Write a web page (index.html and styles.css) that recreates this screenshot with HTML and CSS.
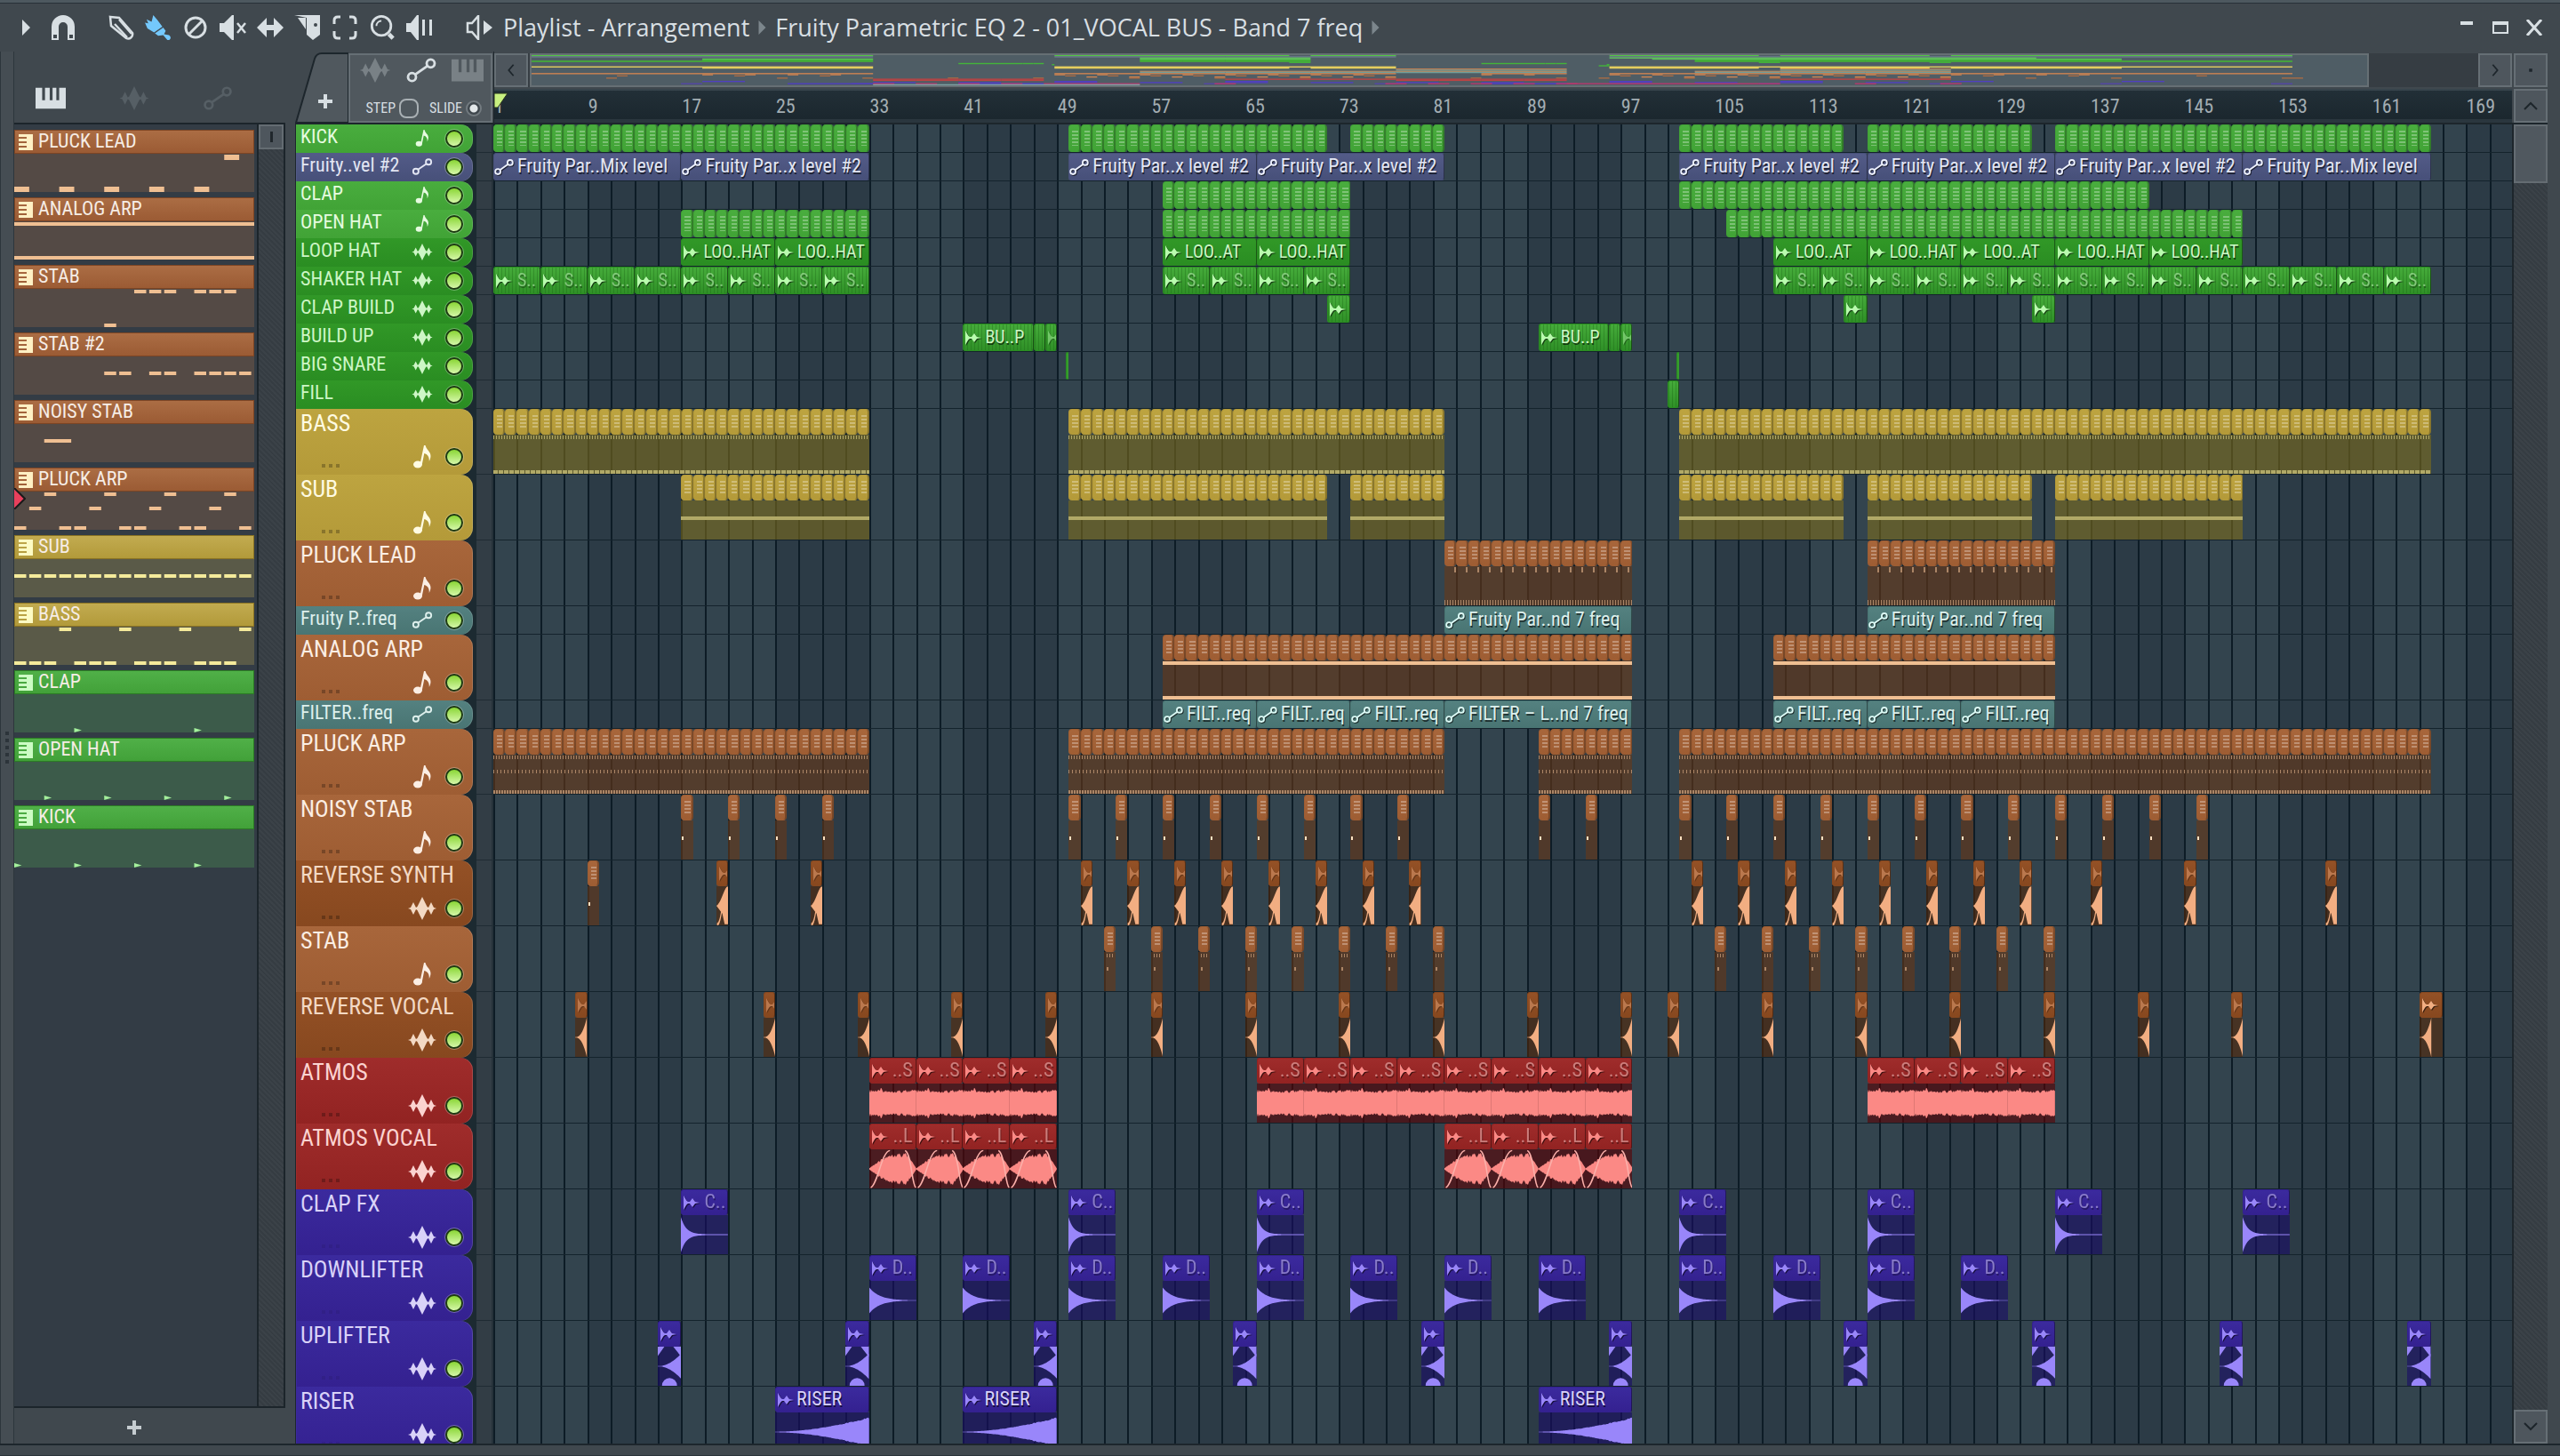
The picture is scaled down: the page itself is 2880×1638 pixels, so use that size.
FILE: index.html
```html
<!DOCTYPE html>
<html lang="en">
<head>
    <meta charset="UTF-8">
    <meta name="viewport" content="width=device-width, initial-scale=1.0">
    <title>Playlist - Arrangement</title>
    <link rel="stylesheet" href="styles.css">
</head>
<body>
    <!-- shared icons -->
    <svg class="defs" aria-hidden="true">
        <symbol id="i-note" viewBox="0 0 20 26"><ellipse cx="5" cy="21.500" rx="5" ry="4"/><path d="M7.500 21 12 0h1.500c1 5 6 7 6 12 0 2-.7 4-1.700 6 .3-5-1.500-8-5.500-9L9.800 21.500z"/></symbol>
        <symbol id="i-wave" viewBox="0 0 32 26"><path d="M0 13l3-1 3-6 3 6 1.500-1L14 4l2-4 2 4 3.500 7 1.500 1 3-6 3 6 3 1-3 1-3 6-3-6-1.500 1L18 22l-2 4-2-4-3.500-7L9 14l-3 6-3-6z"/></symbol>
        <symbol id="i-line" viewBox="0 0 24 20"><g fill="none" stroke="currentColor" stroke-width="2"><circle cx="4.500" cy="15.500" r="3.200"/><circle cx="19.500" cy="4.500" r="3.200"/><path d="M7 13.500 17 6.500"/></g></symbol>
        <symbol id="i-clip" viewBox="0 0 18 18"><path d="M0 1c2 3 3 6 5 7l2 0 3-4 3 4 5 1-5 1-3 4-3-4H5c-2 1-3 4-5 7z"/></symbol>
        <symbol id="i-piano" viewBox="0 0 32 22"><path d="M0 0h7v13h3V0h5v13h3V0h4v13h3V0h7v22H0z"/></symbol>
        <symbol id="i-keys" viewBox="0 0 16 18"><path d="M0 0h16v18H0v-3h9v-2H0V10h9V8H0V5h9V3H0z"/></symbol>
    </svg>

    <div class="window">
        <header class="titlebar">
            <button class="tool tool-arrow" aria-label="Menu"><svg viewBox="0 0 9 18"><path d="M0 0l9 9-9 9z"/></svg></button>
            <button class="tool tool-magnet" aria-label="Snap"><svg viewBox="0 0 26 28"><path d="M0 28V13a13 13 0 0 1 26 0v15h-8V13a5 5 0 0 0-10 0v15zM2 22v4h4v-4zM20 22v4h4v-4z" fill-rule="evenodd"/></svg></button>
            <button class="tool" aria-label="Draw"><svg viewBox="0 0 30 28"><g fill="none" stroke="currentColor" stroke-width="2.500"><path d="M3 2l10 1 15 17c1 4-3 8-7 6L4 12z"/><path d="M8 10l14 15M13 5l14 16"/></g></svg></button>
            <button class="tool tool-on" aria-label="Paint"><svg viewBox="0 0 32 30"><path d="M10 0l5 6 6 8-10 7-8-5-3-7 4 1-2-5 6 3zM22 15l3 4-2 4 6 1c4 3 1 7-2 6l-5-6-6 1-4-3z"/></svg></button>
            <button class="tool" aria-label="Delete"><svg viewBox="0 0 28 28"><g fill="none" stroke="currentColor" stroke-width="3"><circle cx="14" cy="14" r="11"/><path d="M6 22 22 6"/></g></svg></button>
            <button class="tool" aria-label="Mute"><svg viewBox="0 0 30 28"><path d="M0 9h5l9-9h2v28h-2l-9-9H0z"/><path d="M20 9l9 11M29 9l-9 11" fill="none" stroke="currentColor" stroke-width="2.500"/></svg></button>
            <button class="tool" aria-label="Slip"><svg viewBox="0 0 30 28"><path d="M0 14 11 3v8h8V3l11 11-11 11v-8h-8v8z"/></svg></button>
            <button class="tool" aria-label="Slice"><svg viewBox="0 0 30 28"><path d="M0 0h29v22l-8 6-7-6V3zM4 3l9 13V3zM22 11a2 2 0 1 0 4 0 2 2 0 1 0-4 0" fill-rule="evenodd"/></svg></button>
            <button class="tool" aria-label="Select"><svg viewBox="0 0 28 28"><path d="M2 10V6q0-4 4-4h3M19 2h3q4 0 4 4v4M26 18v4q0 4-4 4h-3M9 26H6q-4 0-4-4v-4" fill="none" stroke="currentColor" stroke-width="3"/></svg></button>
            <button class="tool" aria-label="Zoom"><svg viewBox="0 0 30 30"><g fill="none" stroke="currentColor"><circle cx="14" cy="13" r="11.500" stroke-width="3"/><path d="M8 13a6 6 0 0 1 6-6" stroke-width="2"/><path d="M23 23l5 5" stroke-width="5"/></g></svg></button>
            <button class="tool" aria-label="Playback"><svg viewBox="0 0 30 28"><path d="M0 9h5l7-9h2v28h-2l-7-9H0zM18 5h3v18h-3zM26 5h3v18h-3z"/></svg></button>
            <button class="tool tool-speaker" aria-label="Preview"><svg viewBox="0 0 30 28"><path d="M2 9h5l7-8v26l-7-8H2z" fill="none" stroke="currentColor" stroke-width="2.500"/><path d="M20 6l10 8-10 8z"/></svg></button>
            <h1 class="crumbs">
                <span>Playlist - Arrangement</span>
                <svg class="crumb-arrow" viewBox="0 0 8 16"><path d="M0 0l8 8-8 8z"/></svg>
                <span>Fruity Parametric EQ 2 - 01_VOCAL BUS - Band 7 freq</span>
                <svg class="crumb-arrow" viewBox="0 0 8 16"><path d="M0 0l8 8-8 8z"/></svg>
            </h1>
            <div class="window-buttons">
                <button aria-label="Minimize"><svg viewBox="0 0 18 18"><path d="M2 2h14v4H2z"/></svg></button>
                <button aria-label="Maximize"><svg viewBox="0 0 18 18"><path d="M0 2h18v14H0zM2 6v8h14V6z" fill-rule="evenodd"/></svg></button>
                <button aria-label="Close"><svg viewBox="0 0 18 18"><path d="M1 0l16 18M17 0 1 18" fill="none" stroke="currentColor" stroke-width="3"/></svg></button>
            </div>
        </header>

        <main class="workspace">
            <div class="grip"><i></i><i></i><i></i><i></i><i></i></div>

            <!-- pattern picker -->
            <aside class="picker">
                <nav class="picker-tabs">
                    <button class="picker-tab active" aria-label="Patterns"><svg><use href="#i-piano"/></svg></button>
                    <button class="picker-tab" aria-label="Audio"><svg><use href="#i-wave"/></svg></button>
                    <button class="picker-tab" aria-label="Automation"><svg><use href="#i-line"/></svg></button>
                </nav>
                <div class="picker-body">
                    <div class="picker-list" id="pickerList"></div>
                    <div class="picker-scroll hatch"><div class="picker-thumb"></div></div>
                </div>
                <button class="picker-add" aria-label="Add pattern"><svg viewBox="0 0 16 16"><path d="M6 0h4v6h6v4h-6v6H6v-6H0V6h6z"/></svg></button>
            </aside>

            <!-- arrangement -->
            <section class="arrangement">
                <div class="corner">
                    <div class="corner-tab">
                        <svg class="corner-shape" viewBox="0 0 60 80" preserveAspectRatio="none"><path d="M1 80 22 8q2-6 8-6h30v78z"/></svg>
                        <button class="corner-add" aria-label="Add track"><svg viewBox="0 0 16 16"><path d="M6 0h4v6h6v4h-6v6H6v-6H0V6h6z"/></svg></button>
                    </div>
                    <div class="corner-box">
                        <div class="corner-modes">
                            <button class="dim" aria-label="Audio clips"><svg><use href="#i-wave"/></svg></button>
                            <button aria-label="Automation clips"><svg><use href="#i-line"/></svg></button>
                            <button class="dim" aria-label="Pattern clips"><svg><use href="#i-piano"/></svg></button>
                        </div>
                        <div class="corner-opts">
                            <label for="step">STEP</label><input type="checkbox" id="step" class="step-box">
                            <label for="slide">SLIDE</label><input type="checkbox" id="slide" class="slide-box" checked>
                        </div>
                    </div>
                </div>
                <div class="timeline">
                    <div class="overview">
                        <button class="scroll-button" aria-label="Scroll left"><svg viewBox="0 0 10 18"><path d="M8 2 2 9l6 7"/></svg></button>
                        <div class="overview-track">
                            <svg class="minimap" id="minimap" viewBox="0 0 172 27" preserveAspectRatio="none"></svg>
                        </div>
                        <button class="scroll-button" aria-label="Scroll right"><svg viewBox="0 0 10 18"><path d="M2 2l6 7-6 7"/></svg></button>
                    </div>
                    <div class="ruler" id="ruler"><svg class="playhead" viewBox="0 0 16 18"><path d="M0 1h15L4 17H0z"/></svg></div>
                </div>
                <div class="side-head">
                    <button class="scroll-button" aria-label="Options"><svg viewBox="0 0 10 18"><path d="M5 7v4" class="thick"/></svg></button>
                    <button class="scroll-button" aria-label="Scroll up"><svg viewBox="0 0 16 10"><path d="M1 9l7-7 7 7"/></svg></button>
                </div>

                <div class="tracks" id="tracks">
                    <div class="cells" id="cells"></div>
                </div>
                <div class="side-scroll hatch">
                    <div class="side-thumb"></div>
                    <button class="scroll-button" aria-label="Scroll down"><svg viewBox="0 0 16 10"><path d="M1 1l7 7 7-7"/></svg></button>
                </div>
            </section>
        </main>
        <footer class="bottom-edge"></footer>
    </div>

    <script src="playlist.js"></script>
</body>
</html>
```
FILE: styles.css
```css
* {
    box-sizing: border-box;
}
body {
    margin: 0;
    background-color: #40484e;
    color: #d8dfe3;
    font-family: "Roboto Condensed", "Open Sans Condensed", "Open Sans", sans-serif;
    font-size: 22px;
}
button {
    display: flex;
    align-items: center;
    justify-content: center;
    padding: 0;
    border: 0;
    background: none;
    color: inherit;
    font: inherit;
}
svg {
    display: block;
    fill: currentColor;
}
.defs {
    position: absolute;
    width: 0;
    height: 0;
}
.window {
    display: flex;
    flex-direction: column;
    height: 100vh;
    border-top: 3px solid #4d585f;
    overflow: hidden;
}

/* title bar */
.titlebar {
    display: flex;
    align-items: center;
    flex: none;
    height: 55px;
    padding: 0 20px 0 24px;
    border-top: 1px solid #283138;
}
.tool {
    width: 30px;
    height: 30px;
    margin-right: 12px;
}
.tool svg {
    width: 30px;
    height: 28px;
}
.tool-arrow {
    width: 10px;
    margin-right: 22px;
}
.tool-arrow svg {
    width: 9px;
    height: 18px;
}
.tool-magnet {
    margin-right: 35px;
}
.tool-on {
    color: #74c8fc;
}
.tool-speaker {
    margin-left: 25px;
}
.crumbs {
    display: flex;
    align-items: center;
    flex: 1;
    gap: 10px;
    margin: 0;
    font-family: "Open Sans", "Noto Sans", sans-serif;
    font-size: 27px;
    line-height: 32px;
    font-weight: 400;
}
.crumb-arrow {
    width: 9px;
    height: 16px;
    color: #7c868c;
}
.window-buttons {
    display: flex;
    gap: 20px;
}
.window-buttons svg {
    width: 18px;
    height: 18px;
}

/* main area */
.workspace {
    display: flex;
    flex: 1;
    min-height: 0;
    padding-right: 14px;
}
.grip {
    display: flex;
    flex-direction: column;
    align-items: center;
    justify-content: center;
    gap: 4px;
    width: 16px;
    border-left: 1px solid #2d363c;
    border-right: 1px solid #2d363c;
    background-color: #454d53;
}
.grip i {
    width: 4px;
    height: 4px;
    background-color: #2c343a;
}

/* pattern picker */
.picker {
    display: flex;
    flex-direction: column;
    width: 305px;
    margin-right: 11px;
}
.picker-tabs {
    display: flex;
    align-items: flex-end;
    gap: 60px;
    height: 80px;
    padding: 0 0 14px 24px;
}
.picker-tab {
    color: #565f65;
}
.picker-tab.active {
    color: #d8dfe3;
}
.picker-tab svg {
    width: 34px;
    height: 27px;
}
.picker-body {
    display: flex;
    flex: 1;
    min-height: 0;
    border-top: 2px solid #1c252b;
    border-bottom: 2px solid #1c252b;
    border-right: 2px solid #1c252b;
}
.picker-list {
    flex: 1;
    padding-top: 6px;
    background-color: #333c45;
    overflow: hidden;
}
.picker-item {
    position: relative;
    margin: 0 3px 6px 0;
}
.picker-name {
    display: flex;
    align-items: center;
    gap: 6px;
    height: 27px;
    padding-left: 4px;
    border: 1px solid var(--edge);
    background: linear-gradient(var(--top), var(--bottom));
    color: #f6ede6;
    font-size: 22px;
    line-height: 22px;
}
.picker-name span {
    padding-bottom: 2px;
}
.picker-name svg {
    width: 16px;
    height: 18px;
    color: var(--key);
}
.picker-notes {
    width: 100%;
    height: 43px;
    background-color: var(--body);
    color: var(--note);
}
.picker-cursor {
    position: absolute;
    left: 0;
    top: 23px;
    width: 13px;
    height: 24px;
    fill: #e8405c;
    stroke: #1a1a1a;
    stroke-width: 2;
}
.picker-scroll {
    width: 30px;
    border-left: 2px solid #1c252b;
}
.picker-thumb {
    width: 28px;
    height: 28px;
    border: 2px solid #646c72;
    background: linear-gradient(#20272c, #20272c) center / 3px 12px no-repeat #4e565d;
}
.picker-add {
    flex: none;
    width: 270px;
    height: 40px;
    padding-top: 4px;
    color: #c5ccd0;
}
.picker-add svg, .corner-add svg {
    width: 16px;
    height: 16px;
}
.hatch {
    background: repeating-linear-gradient(45deg, #353c42 0 2px, #3b4248 2px 4px);
}
.brown {
    --top: #ab6d44;
    --bottom: #9b5b34;
    --edge: #7d4524;
    --body: #544a45;
    --note: #efbf92;
    --key: #fff0c4;
}
.yellow {
    --top: #c2ab50;
    --bottom: #b29a3a;
    --edge: #8b7423;
    --body: #5a5a48;
    --note: #f4ea9b;
    --key: #fdfbc4;
}
.green {
    --top: #50b048;
    --bottom: #42a139;
    --edge: #2b7c24;
    --body: #3c5b4a;
    --note: #a4f09c;
    --key: #ccfcc4;
}

/* arrangement layout */
.arrangement {
    display: grid;
    grid-template-columns: 223px 1fr 40px;
    grid-template-rows: 80px 1fr;
    flex: 1;
    min-width: 0;
}
.corner {
    display: flex;
    padding-right: 1px;
}
.corner-tab {
    position: relative;
    width: 60px;
    height: 80px;
}
.corner-shape {
    position: absolute;
    inset: 0;
    width: 60px;
    height: 80px;
    fill: #50585e;
    stroke: #1d262c;
    stroke-width: 2;
}
.corner-add {
    position: absolute;
    left: 22px;
    top: 44px;
    width: 24px;
    height: 24px;
}
.corner-box {
    flex: 1;
    margin-top: 2px;
    border: 2px solid #666f75;
    background-color: #50585e;
}
.corner-modes {
    display: flex;
    justify-content: space-between;
    padding: 3px 8px 0 10px;
}
.corner-modes svg {
    width: 36px;
    height: 28px;
}
.corner-modes .dim {
    color: #798186;
}
.corner-opts {
    display: flex;
    align-items: center;
    justify-content: flex-end;
    height: 43px;
    padding: 14px 10px 0 0;
    gap: 4px;
    font-size: 16px;
}
.corner-opts label + input {
    margin: 0 8px 0 0;
}
.corner-opts .slide-box {
    margin: 0;
}
.step-box {
    appearance: none;
    width: 22px;
    height: 22px;
    border: 2px solid #a9b0b4;
    border-radius: 8px;
}
.slide-box {
    appearance: none;
    width: 18px;
    height: 18px;
    border: 2px solid #737b80;
    border-radius: 9px;
    background: radial-gradient(#e3e8ea 0 4px, #3f474d 5px);
}
.timeline {
    min-width: 0;
    padding-top: 2px;
    border-left: 1px solid #1d262c;
}
.overview {
    display: flex;
    height: 38px;
}
.overview-track {
    flex: 1;
    padding: 0 123px 0 2px;
    background-color: #363d43;
}
.minimap {
    width: 100%;
    height: 38px;
    border: 2px solid #666f74;
    background-color: #4f5d65;
}
.scroll-button {
    width: 38px;
    height: 38px;
    border: 2px solid #666f75;
    background-color: #4e565d;
}
.scroll-button svg {
    width: 16px;
    height: 16px;
    fill: none;
    stroke: #1d252b;
    stroke-width: 2;
}
.scroll-button .thick {
    stroke-width: 4;
}
.ruler {
    position: relative;
    height: 38px;
    margin-top: 2px;
    border-top: 2px solid #37444c;
    border-bottom: 4px solid #2a363e;
    background: linear-gradient(#222f37, #1b272e);
    overflow: hidden;
}
.ruler span {
    position: absolute;
    top: 4px;
    color: #a3adb2;
    font-size: 22px;
    line-height: 28px;
}
.playhead {
    position: absolute;
    left: 0;
    top: 2px;
    width: 16px;
    height: 18px;
    fill: #c8f080;
    stroke: #27331d;
}
.side-head {
    display: flex;
    flex-direction: column;
    gap: 2px;
    padding: 2px 0 0 2px;
}
.side-scroll {
    display: flex;
    flex-direction: column;
    justify-content: space-between;
    border-left: 2px solid #1d262c;
    border-top: 2px solid #1d262c;
    min-height: 0;
}
.side-thumb {
    height: 66px;
    border: 2px solid #646c72;
    background-color: #50585f;
}

/* tracks */
.tracks {
    position: relative;
    grid-column: 1 / 3;
    min-height: 0;
    border-top: 2px solid #1d262c;
    border-left: 1px solid #1d262c;
    background-color: #1c2a31;
    overflow: hidden;
}
.cells {
    position: absolute;
    inset: 0 0 0 222px;
    display: flex;
    overflow: hidden;
}
.cell {
    flex: none;
    border-left: 2px solid #0d1c26;
    background-color: #33444e;
}
.cell.odd {
    background-color: #2c3b46;
}
.track {
    position: relative;
    display: flex;
    height: 32px;
}
.track.tall {
    height: 74px;
}
.track-head {
    position: relative;
    display: flex;
    justify-content: space-between;
    width: 199px;
    margin-right: 4px;
    padding: 0 11px 0 4px;
    border-left: 1px solid var(--top);
    border-radius: 0 14px 14px 0;
    background: linear-gradient(var(--top), var(--bottom));
    box-shadow: inset -1px 0 rgba(255, 255, 255, 0.15);
    color: var(--ink);
}
.track-name {
    font-size: 22px;
    line-height: 28px;
    white-space: nowrap;
}
.tall .track-name {
    font-size: 26px;
    line-height: 32px;
}
.track-tools {
    display: flex;
    align-items: center;
    gap: 14px;
    height: 31px;
}
.track-tools svg {
    width: 24px;
    height: 19px;
}
.tall .track-tools {
    position: absolute;
    right: 11px;
    bottom: 5px;
    gap: 10px;
}
.tall .track-tools svg {
    width: 32px;
    height: 26px;
}
.led {
    appearance: none;
    width: 20px;
    height: 20px;
    margin: 0;
    border: 2px solid #1d3a12;
    border-radius: 10px;
    outline: 1px solid rgba(255, 255, 255, 0.3);
    background: linear-gradient(#8ad636, #d5f7a8);
}
.dots {
    position: absolute;
    left: 28px;
    bottom: 8px;
    width: 20px;
    height: 4px;
    background: repeating-linear-gradient(90deg, rgba(0, 0, 0, 0.25) 0 4px, transparent 4px 8px);
}
.track-blue .dots {
    opacity: 0.3;
}
.track-gap {
    width: 19px;
    border-right: 2px solid #26323a;
    border-bottom: 1px solid #1f2b33;
    background-color: #323d45;
}
.lane {
    position: relative;
    flex: 1;
    border-bottom: 1px solid #14232c;
}
.track-green { --top: #49ad3e; --bottom: #41a336; --ink: #e6fbe0; --body: rgba(40, 120, 30, 0.6); --wave: #c0ffb0; }
.track-forest { --top: #319827; --bottom: #2a8d22; --ink: #cdf6c6; --wave: #b9fcae; }
.track-indigo { --top: #535b88; --bottom: #475079; --ink: #e3e6f3; --wave: #eef2ff; }
.track-yellow { --top: #bda440; --bottom: #b49a39; --ink: #fffbe2; --body: rgba(125, 108, 28, 0.6); --wave: #b1a967; }
.track-brown { --top: #a8663b; --bottom: #9e5d33; --ink: #fbeee4; --body: rgba(105, 57, 23, 0.6); --wave: #ab8566; }
.track-rust { --top: #945126; --bottom: #87481f; --ink: #f3d9c4; --body: rgba(85, 40, 8, 0.6); --wave: #f2ae82; }
.track-teal { --top: #548180; --bottom: #497573; --ink: #ddefec; --wave: #dcfbf6; }
.track-red { --top: #9f2c2b; --bottom: #922322; --ink: #fbd3d0; --body: rgba(92, 2, 4, 0.6); --wave: #fb8985; }
.track-blue { --top: #3b2a9e; --bottom: #342190; --ink: #d9d2f8; --body: rgba(25, 12, 104, 0.6); --wave: #9986fa; }

/* clips */
.clip {
    position: absolute;
    top: 0;
    bottom: 0;
    display: flex;
    flex-direction: column;
    overflow: hidden;
}
.tiles {
    display: flex;
    height: 100%;
}
.tall .tiles, .tall .clip-head {
    flex: none;
    height: 29px;
}
.tile {
    flex: 1;
    padding: 6px 1px 6px 3px;
    border: 1px solid var(--bottom);
    border-right: 2px solid rgba(0, 0, 0, 0.25);
    border-radius: 4px;
    background: linear-gradient(var(--top), var(--bottom));
}
.tile i {
    display: block;
    height: 100%;
    background: repeating-linear-gradient(rgba(255, 255, 255, 0.3) 0 2px, transparent 2px 4px);
}
.clip-head {
    display: flex;
    align-items: center;
    gap: 3px;
    height: 100%;
    padding: 0 0 0 2px;
    border: 1px solid var(--bottom);
    border-right: 1px solid rgba(0, 0, 0, 0.4);
    border-radius: 3px;
    background: linear-gradient(var(--top), var(--bottom));
    color: var(--ink);
    font-size: 22px;
    line-height: 22px;
    white-space: nowrap;
    overflow: hidden;
}
.track-forest .clip-head {
    font-size: 20px;
    gap: 4px;
}
.clip-head svg {
    flex: none;
    width: 18px;
    height: 18px;
    color: var(--wave);
    filter: drop-shadow(1px 1px rgba(0, 0, 0, 0.6));
}
.clip-head.auto {
    gap: 4px;
    padding-left: 0;
}
.clip-head.auto svg {
    width: 22px;
    height: 20px;
}
.clip-head span {
    padding-bottom: 2px;
    text-shadow: 1px 2px rgba(0, 0, 0, 0.6);
}
.clip-head.faint span {
    padding-left: 2px;
    opacity: 0.5;
}
.clip-head.end {
    justify-content: space-between;
    padding-right: 3px;
}
.clip-head.ghost svg {
    opacity: 0.45;
}
.clip-head.striped {
    background: repeating-linear-gradient(90deg, rgba(20, 90, 15, 0.3) 0 1px, transparent 1px 4px), linear-gradient(#45ab3a, #2f9027);
}
.clip-body {
    flex: 1;
    width: 100%;
    min-height: 0;
    background-color: var(--body);
    fill: var(--wave);
}
.n-bass {
    background-image: repeating-linear-gradient(90deg, var(--wave) 0 1px, transparent 1px 3px), repeating-linear-gradient(90deg, var(--wave) 0 5px, transparent 5px 6px);
    background-size: 100% 4px;
    background-position: 0 1px, 0 100%;
    background-repeat: no-repeat;
}
.n-sub {
    background-image: linear-gradient(var(--wave), var(--wave));
    background-size: 100% 4px;
    background-position: 0 18px;
    background-repeat: no-repeat;
}
.n-lead {
    background-image: repeating-linear-gradient(90deg, transparent 0 11px, var(--wave) 11px 13px), repeating-linear-gradient(90deg, var(--wave) 0 1px, transparent 1px 3px);
    background-size: 100% 6px;
    background-position: 0 1px, 0 100%;
    background-repeat: no-repeat;
}
.n-analog {
    background-image: linear-gradient(#efbf92, #efbf92), linear-gradient(#efbf92, #efbf92);
    background-size: 100% 4px;
    background-position: 0 1px, 0 100%;
    background-repeat: no-repeat;
}
.n-arp {
    background-image: repeating-linear-gradient(90deg, var(--wave) 0 1px, transparent 1px 3px), repeating-linear-gradient(90deg, var(--wave) 0 1px, transparent 1px 4px), repeating-linear-gradient(90deg, var(--wave) 0 2px, transparent 2px 3px);
    background-size: 100% 4px;
    background-position: 0 1px, 0 17px, 0 100%;
    background-repeat: no-repeat;
}
.n-noisy {
    background-image: linear-gradient(#ffe2c2, #ffe2c2);
    background-size: 2px 4px;
    background-position: 1px 18px;
    background-repeat: no-repeat;
}
.n-stab {
    background-image: repeating-linear-gradient(90deg, var(--wave) 0 1px, transparent 1px 3px), linear-gradient(var(--wave), var(--wave));
    background-size: 8px 4px, 2px 4px;
    background-position: 3px 2px, 3px 17px;
    background-repeat: no-repeat;
}
.sliver {
    background: linear-gradient(90deg, #2c8a25, #3fae35, #2c8a25);
}
.bottom-edge {
    flex: none;
    height: 14px;
    border-top: 2px solid #1d262c;
    border-bottom: 1px solid #2b343a;
}
```
FILE: playlist.js
```js
const BARS = 171.9; // bars visible in the arrangement
const pct = bars => (bars / BARS * 100) + '%';

// pattern picker: notes are [row y, note height, length in steps, steps...]
const all16 = [0, 1, 2, 3, 4, 5, 6, 7, 8, 9, 10, 11, 12, 13, 14, 15];
const patterns = [
    {name: 'PLUCK LEAD', color: 'brown', notes: [[1, 6, 1, 14], [37, 6, 1, 0, 3, 6, 9, 12]]},
    {name: 'ANALOG ARP', color: 'brown', notes: [[1, 4, 16, 0], [39, 4, 16, 0]]},
    {name: 'STAB', color: 'brown', notes: [[1, 4, 0.8, 8, 9, 10, 12, 13, 14], [39, 4, 0.8, 6]]},
    {name: 'STAB #2', color: 'brown', notes: [[17, 4, 0.8, 6, 7, 9, 10, 12, 13, 14, 15]]},
    {name: 'NOISY STAB', color: 'brown', notes: [[17, 4, 1.8, 2]]},
    {name: 'PLUCK ARP', color: 'brown', cursor: true, notes: [[1, 4, 0.8, 2, 6, 10, 14], [17, 4, 0.8, 1, 5, 9, 13], [39, 4, 0.8, 0, 3, 4, 7, 8, 11, 12, 15]]},
    {name: 'SUB', color: 'yellow', notes: [[17, 4, 0.8, ...all16]]},
    {name: 'BASS', color: 'yellow', notes: [[1, 4, 0.8, 3, 7, 11, 15], [39, 4, 0.8, 0, 1, 2, 4, 5, 6, 8, 9, 10, 12, 13, 14]]},
    {name: 'CLAP', color: 'green', hits: [4, 12]},
    {name: 'OPEN HAT', color: 'green', hits: [2, 6, 10, 14]},
    {name: 'KICK', color: 'green', hits: [0, 4, 8, 12]}
];

document.getElementById('pickerList').innerHTML = patterns.map(p => {
    let shapes = '';
    (p.notes || []).forEach(([y, h, len, ...steps]) => {
        steps.forEach(s => {
            shapes += `<rect x="${s * 10}" y="${y}" width="${len * 10}" height="${h}"/>`;
        });
    });
    (p.hits || []).forEach(s => {
        shapes += `<path d="M${s * 10} 38l5 2.500-5 2.500z"/>`;
    });
    return `<div class="picker-item ${p.color}">
        <div class="picker-name"><svg><use href="#i-keys"/></svg><span>${p.name}</span></div>
        <svg class="picker-notes" viewBox="0 0 160 43" preserveAspectRatio="none">${shapes}</svg>
        ${p.cursor ? '<svg class="picker-cursor" viewBox="0 0 13 24"><path d="M-2-2 12 12-2 26z"/></svg>' : ''}
    </div>`;
}).join('');

// repeat clips of the same length
const every = (from, to, len, label, extra) => {
    const list = [];
    for (let b = from; b < to; b += len) list.push([b, b + len, label, extra]);
    return list;
};
const at = (starts, len, label) => starts.map(b => [b, b + len, label]);

// runs are rows of one bar patterns [from, to], clips are [from, to, label]
const tracks = [
    {name: 'KICK', kind: 'note', color: 'green', map: '#52c644', runs: [[0, 32], [49, 71], [73, 81], [101, 115], [117, 131], [133, 165]]},
    {name: 'Fruity..vel #2', kind: 'line', color: 'indigo', map: '#6d7692', clips: [[0, 16, 'Fruity Par..Mix level'], ...at([16, 49, 65, 101, 117, 133], 16, 'Fruity Par..x level #2'), [149, 165, 'Fruity Par..Mix level']]},
    {name: 'CLAP', kind: 'note', color: 'green', map: '#5fc05c', runs: [[57, 73], [101, 141]]},
    {name: 'OPEN HAT', kind: 'note', color: 'green', map: '#5fc05c', runs: [[16, 32], [57, 73], [105, 149]]},
    {name: 'LOOP HAT', kind: 'wave', color: 'forest', map: '#43b53a', clips: [...at([16, 24, 65, 117, 133, 141], 8, 'LOO..HAT'), ...at([57, 109, 125], 8, 'LOO..AT')]},
    {name: 'SHAKER HAT', kind: 'wave', color: 'forest', map: '#43c030', look: 'striped', clips: [...every(0, 32, 4, 'S..', 'faint'), ...every(57, 73, 4, 'S..', 'faint'), ...every(109, 165, 4, 'S..', 'faint')]},
    {name: 'CLAP BUILD', kind: 'wave', color: 'forest', map: '#43b53a', look: 'striped', clips: at([71, 115, 131], 2, '')},
    {name: 'BUILD UP', kind: 'wave', color: 'forest', map: '#43b53a', look: 'striped', clips: [[40, 46, 'BU..P'], [46, 47, null], [47, 48, '', 'ghost'], [89, 95, 'BU..P'], [95, 96, null], [96, 97, '', 'ghost']]},
    {name: 'BIG SNARE', kind: 'wave', color: 'forest', map: '#43b53a', clips: [[48.75, 49, null], [100.75, 101, null]]},
    {name: 'FILL', kind: 'wave', color: 'forest', map: '#43b53a', look: 'striped', clips: [[100, 101, null]]},
    {name: 'BASS', kind: 'note', color: 'yellow', map: '#e6cf5e', notes: 'bass', runs: [[0, 32], [49, 81], [101, 165]]},
    {name: 'SUB', kind: 'note', color: 'yellow', map: '#e6cf5e', notes: 'sub', runs: [[16, 32], [49, 71], [73, 81], [101, 115], [117, 131], [133, 149]]},
    {name: 'PLUCK LEAD', kind: 'note', color: 'brown', map: '#cf8552', notes: 'lead', runs: [[81, 97], [117, 133]]},
    {name: 'Fruity P..freq', kind: 'line', color: 'teal', map: '#6f9d9b', clips: at([81, 117], 16, 'Fruity Par..nd 7 freq')},
    {name: 'ANALOG ARP', kind: 'note', color: 'brown', map: '#b08a63', notes: 'analog', runs: [[57, 97], [109, 133]]},
    {name: 'FILTER..freq', kind: 'line', color: 'teal', map: '#6f9d9b', clips: [...at([57, 65, 73, 109, 117, 125], 8, 'FILT..req'), [81, 97, 'FILTER – L..nd 7 freq']]},
    {name: 'PLUCK ARP', kind: 'note', color: 'brown', map: '#cf8552', notes: 'arp', runs: [[0, 32], [49, 81], [89, 97], [101, 165]]},
    {name: 'NOISY STAB', kind: 'note', color: 'brown', map: '#cf8552', notes: 'noisy', runs: at([16, 20, 24, 28, 49, 53, 57, 61, 65, 69, 73, 77, 89, 93, 101, 105, 109, 113, 117, 121, 125, 129, 133, 137, 141, 145], 1)},
    {name: 'REVERSE SYNTH', kind: 'wave', color: 'rust', map: '#a96c45', notes: 'noisy', wave: 'rsynth', runs: [[8, 9]], clips: at([19, 27, 50, 54, 58, 62, 66, 70, 74, 78, 102, 106, 110, 114, 118, 122, 126, 130, 136, 144, 156], 1, '')},
    {name: 'STAB', kind: 'note', color: 'brown', map: '#cf8552', notes: 'stab', runs: at([52, 56, 60, 64, 68, 72, 76, 80, 104, 108, 112, 116, 120, 124, 128, 132], 1)},
    {name: 'REVERSE VOCAL', kind: 'wave', color: 'rust', map: '#a96c45', wave: 'rvocal', clips: [...at([7, 23, 31, 39, 47, 56, 64, 72, 80, 88, 96, 100, 108, 116, 124, 132, 140, 148], 1, ''), [164, 166, '', 'half']]},
    {name: 'ATMOS', kind: 'wave', color: 'red', map: '#bb4444', wave: 'atmos', clips: [...every(32, 48, 4, '..S', 'faint end'), ...every(65, 97, 4, '..S', 'faint end'), ...every(117, 133, 4, '..S', 'faint end')]},
    {name: 'ATMOS VOCAL', kind: 'wave', color: 'red', map: '#bb4444', wave: 'avocal', clips: [...every(32, 48, 4, '..L', 'faint end'), ...every(81, 97, 4, '..L', 'faint end')]},
    {name: 'CLAP FX', kind: 'wave', color: 'blue', map: '#5040c0', wave: 'clapfx', clips: at([16, 49, 65, 101, 117, 133, 149], 4, 'C..').map(c => [...c, 'faint'])},
    {name: 'DOWNLIFTER', kind: 'wave', color: 'blue', map: '#5040c0', wave: 'down', clips: at([32, 40, 49, 57, 65, 73, 81, 89, 101, 109, 117, 125], 4, 'D..').map(c => [...c, 'faint'])},
    {name: 'UPLIFTER', kind: 'wave', color: 'blue', map: '#5547a8', wave: 'up', clips: at([14, 30, 46, 63, 79, 95, 115, 131, 147, 163], 2, '')},
    {name: 'RISER', kind: 'wave', color: 'blue', map: '#5040c0', wave: 'riser', clips: at([24, 40, 89], 8, 'RISER')}
];

// mirrored waveform from an envelope function, 0..1 both ways
function wavePath(env, steps, noise) {
    let top = '', bottom = '';
    for (let i = 0; i <= steps; i++) {
        const jag = noise * Math.abs(Math.sin(i * 12.9898) * 43758.5453 % 1);
        const e = Math.max(0.01, env(i / steps) * (1 - jag));
        const x = (i / steps * 100).toFixed(1);
        top += `${i ? 'L' : 'M'}${x} ${(50 - e * 50).toFixed(1)}`;
        bottom = `L${x} ${(50 + e * 50).toFixed(1)}` + bottom;
    }
    return `<path d="${top}${bottom}z"/>`;
}
const waves = {
    atmos: wavePath(t => t > 0.22 && t < 0.28 ? 0.78 : 0.69, 53, 0.25),
    avocal: wavePath(t => Math.min(0.05 + t * 1.8, 0.85, 0.03 + (1 - t) * 4), 53, 0.3) + '<path d="M3 98C18 90 26 5 44 3M76 3C90 10 90 90 99 98" fill="none" stroke="#fbb0aa" stroke-width="3"/>',
    clapfx: wavePath(t => 0.88 * Math.exp(-t * 9) + 0.02, 40, 0),
    down: wavePath(t => 0.66 * Math.exp(-t * 4.5), 40, 0),
    up: wavePath(t => 0.65 * t * t, 20, 0) + '<path d="M0 0h28L0 24zM66 0h34v26zM18 100a32 20 0 0 1 64 0z"/>',
    riser: wavePath(t => 0.75 * Math.min(1, Math.pow(t, 1.8) + 0.02), 80, 0.1),
    rsynth: '<path d="M0 50C40 42 55 15 85 3L100 0V97H70L50 70z"/><path d="M5 98C45 98 50 20 92 5" fill="none" stroke="#f2ae82" stroke-width="8"/>',
    rvocal: wavePath(t => 0.01 + Math.pow(t, 2.5), 20, 0)
};

const lanes = document.getElementById('tracks');
tracks.forEach(t => {
    const tall = t.notes || t.wave;
    let lane = '';
    (t.runs || []).forEach(([from, to]) => {
        lane += `<div class="clip ${t.wave ? 'track-brown' : ''}" style="left:${pct(from)};width:${pct(to - from)}">
            <div class="tiles">${'<div class="tile"><i></i></div>'.repeat(to - from)}</div>
            ${t.notes ? `<div class="clip-body n-${t.notes}"></div>` : ''}</div>`;
    });
    (t.clips || []).forEach(([from, to, label, extra]) => {
        const auto = t.kind === 'line';
        const ghost = label === '' && to - from === 1 ? 'ghost' : '';
        lane += `<div class="clip" style="left:${pct(from)};width:${pct(to - from)}">`;
        if (label === null) {
            lane += `<div class="clip-head ${t.look || 'sliver'}"></div>`;
        } else {
            lane += `<div class="clip-head ${auto ? 'auto' : ''} ${t.look || ''} ${extra || ''} ${ghost}">
                <svg><use href="#i-${auto ? 'line' : 'clip'}"/></svg>${label ? `<span>${label}</span>` : ''}</div>`;
        }
        if (t.wave) {
            lane += `<svg class="clip-body" viewBox="0 0 ${extra === 'half' ? 200 : 100} 100" preserveAspectRatio="none">${waves[t.wave]}</svg>`;
        }
        lane += '</div>';
    });
    lanes.insertAdjacentHTML('beforeend', `<div class="track track-${t.color} ${tall ? 'tall' : ''}">
        <div class="track-head">
            <span class="track-name">${t.name}</span>
            ${tall ? '<span class="dots"></span>' : ''}
            <div class="track-tools"><svg><use href="#i-${t.kind}"/></svg><input type="checkbox" class="led" aria-label="${t.name} on" checked></div>
        </div>
        <div class="track-gap"></div>
        <div class="lane">${lane}</div>
    </div>`);
});

// two bars per cell, shade changes every eight bars
let cells = '';
for (let b = 0; b < BARS; b += 2) {
    cells += `<div class="cell ${b % 16 < 8 ? '' : 'odd'}" style="width:${pct(2)}"></div>`;
}
document.getElementById('cells').innerHTML = cells;

// ruler numbers
let numbers = '';
for (let b = 0; b < BARS; b += 8) {
    numbers += `<span style="left:${pct(b)}">${b + 1}</span>`;
}
document.getElementById('ruler').insertAdjacentHTML('afterbegin', numbers);

// overview
let map = '';
const mark = (row, from, to, color) => {
    map += `<rect x="${from}" y="${row}" width="${to - from}" height="1.100" fill="${color}"/>`;
};
tracks.forEach((t, row) => {
    (t.runs || []).concat(t.clips || []).forEach(([from, to]) => mark(Math.min(row, 25), from, to, t.map));
});
for (let b = 32; b < 48; b += 4) mark(25, b, b + 2, '#b8386e');
for (let b = 80; b < 97; b += 4) mark(25, b, b + 2, '#b8386e');
mark(25, 48, 57, '#b8386e');
mark(25, 64, 66, '#b8386e');
mark(25, 97, 117, '#b8386e');
mark(25, 124, 126, '#b8386e');
mark(25, 132, 134, '#b8386e');
mark(26, 32, 57, '#7fa3a5');
document.getElementById('minimap').innerHTML = map;
```
